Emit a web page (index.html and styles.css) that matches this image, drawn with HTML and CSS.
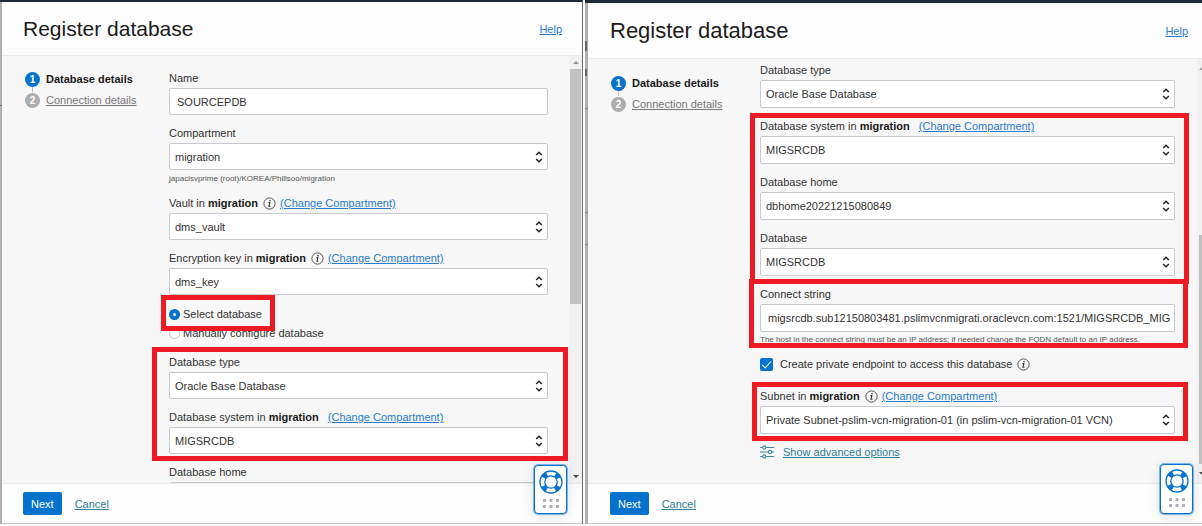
FILE: index.html
```html
<!DOCTYPE html>
<html lang="en">
<head>
<meta charset="utf-8">
<title>Register database</title>
<meta name="viewport" content="width=device-width, initial-scale=1">
<link rel="stylesheet" href="styles.css">
</head>
<body>
<svg class="sprite" aria-hidden="true">
  <symbol id="updown" viewBox="0 0 8 12"><path d="M1.2 4 4 1.3 6.8 4M1.2 8 4 10.7 6.8 8" fill="none" stroke="#222" stroke-width="1.5"/></symbol>
  <symbol id="info" viewBox="0 0 13 13"><circle cx="6.5" cy="6.5" r="5.6" fill="none" stroke="#555" stroke-width="1"/><path d="M5.4 5.6h1.4L6 9.3h1.4" fill="none" stroke="#333" stroke-width="1.1"/><circle cx="7" cy="3.7" r=".8" fill="#333"/></symbol>
  <symbol id="ring" viewBox="0 0 24 24"><circle cx="12" cy="12" r="8.6" fill="none" stroke="#0572ce" stroke-width="5.2" stroke-dasharray="4.8 8.709" stroke-dashoffset="-4.354"/><circle cx="12" cy="12" r="11" fill="none" stroke="#0572ce" stroke-width="1.3"/><circle cx="12" cy="12" r="6.2" fill="#fff" stroke="#0572ce" stroke-width="1.3"/></symbol>
  <symbol id="dots" viewBox="0 0 16 9"><path d="M0 0h3v3H0zM6.500 0h3v3h-3zM13 0h3v3h-3zM0 6h3v3H0zM6.500 6h3v3h-3zM13 6h3v3h-3z" fill="#adb1b8"/></symbol>
  <symbol id="sliders" viewBox="0 0 14 14"><g fill="none" stroke="#3a87a0" stroke-width="1.1"><path d="M0 2.500h2.500M6 2.500h8M0 7h8M12 7h2M0 11.500h2.500M6 11.500h8"/><circle cx="4.300" cy="2.500" r="1.600"/><circle cx="10" cy="7" r="1.600"/><circle cx="4.300" cy="11.500" r="1.600"/></g></symbol>
</svg>
<main class="screens">
  <section class="screen screen-first">
    <div class="backdrop"></div>
    <div class="panel">
      <header class="panel-head"><h1>Register database</h1><a href="#">Help</a></header>
      <div class="panel-body">
        <ol class="steps">
          <li class="current"><span class="num">1</span><span>Database details</span></li>
          <li><span class="num">2</span><a href="#">Connection details</a></li>
        </ol>
        <form class="form">
          <div class="field">
            <div class="label"><label for="name">Name</label></div>
            <input class="text" id="name" type="text" value="SOURCEPDB">
          </div>
          <div class="field">
            <div class="label"><label for="comp">Compartment</label></div>
            <div class="select"><select id="comp"><option>migration</option></select><svg><use href="#updown"/></svg></div>
            <p class="hint">japacisvprime (root)/KOREA/Phillsoo/migration</p>
          </div>
          <div class="field">
            <div class="label"><label for="vault">Vault in <b>migration</b></label><svg class="info"><use href="#info"/></svg><a href="#">(Change Compartment)</a></div>
            <div class="select"><select id="vault"><option>dms_vault</option></select><svg><use href="#updown"/></svg></div>
          </div>
          <div class="field">
            <div class="label"><label for="key">Encryption key in <b>migration</b></label><svg class="info"><use href="#info"/></svg><a href="#">(Change Compartment)</a></div>
            <div class="select"><select id="key"><option>dms_key</option></select><svg><use href="#updown"/></svg></div>
          </div>
          <div class="radios">
            <label class="radio mark mark-radio"><input type="radio" name="mode" checked>Select database</label>
            <label class="radio"><input type="radio" name="mode">Manually configure database</label>
          </div>
          <div class="group mark mark-type">
            <div class="field">
              <div class="label"><label for="type1">Database type</label></div>
              <div class="select"><select id="type1"><option>Oracle Base Database</option></select><svg><use href="#updown"/></svg></div>
            </div>
            <div class="field">
              <div class="label"><label for="sys1">Database system in <b>migration</b></label><a href="#">(Change Compartment)</a></div>
              <div class="select"><select id="sys1"><option>MIGSRCDB</option></select><svg><use href="#updown"/></svg></div>
            </div>
          </div>
          <div class="field">
            <div class="label"><label for="home1">Database home</label></div>
            <div class="select"><select id="home1"><option></option></select></div>
          </div>
        </form>
        <div class="scrollbar"><i class="arrow up"></i><i class="thumb"></i><i class="arrow down"></i></div>
      </div>
      <footer class="panel-foot"><button type="button">Next</button><a href="#">Cancel</a></footer>
      <button class="support" type="button" aria-label="Support"><svg class="ring"><use href="#ring"/></svg><svg class="dots"><use href="#dots"/></svg></button>
    </div>
  </section>
  <section class="screen screen-second">
    <div class="backdrop"></div>
    <div class="panel">
      <header class="panel-head"><h1>Register database</h1><a href="#">Help</a></header>
      <div class="panel-body">
        <ol class="steps">
          <li class="current"><span class="num">1</span><span>Database details</span></li>
          <li><span class="num">2</span><a href="#">Connection details</a></li>
        </ol>
        <form class="form">
          <div class="field">
            <div class="label"><label for="type2">Database type</label></div>
            <div class="select"><select id="type2"><option>Oracle Base Database</option></select><svg><use href="#updown"/></svg></div>
          </div>
          <div class="group mark mark-system">
            <div class="field">
              <div class="label"><label for="sys2">Database system in <b>migration</b></label><a href="#">(Change Compartment)</a></div>
              <div class="select"><select id="sys2"><option>MIGSRCDB</option></select><svg><use href="#updown"/></svg></div>
            </div>
            <div class="field">
              <div class="label"><label for="home2">Database home</label></div>
              <div class="select"><select id="home2"><option>dbhome20221215080849</option></select><svg><use href="#updown"/></svg></div>
            </div>
            <div class="field">
              <div class="label"><label for="db2">Database</label></div>
              <div class="select"><select id="db2"><option>MIGSRCDB</option></select><svg><use href="#updown"/></svg></div>
            </div>
          </div>
          <div class="field mark mark-connect">
            <div class="label"><label for="conn">Connect string</label></div>
            <input class="text" id="conn" type="text" value="migsrcdb.sub12150803481.pslimvcnmigrati.oraclevcn.com:1521/MIGSRCDB_MIG">
            <p class="hint">The host in the connect string must be an IP address; if needed change the FQDN default to an IP address.</p>
          </div>
          <div class="check">
            <input type="checkbox" id="endpoint" checked><label for="endpoint">Create private endpoint to access this database</label><svg class="info"><use href="#info"/></svg>
          </div>
          <div class="field mark mark-subnet">
            <div class="label"><label for="subnet">Subnet in <b>migration</b></label><svg class="info"><use href="#info"/></svg><a href="#">(Change Compartment)</a></div>
            <div class="select"><select id="subnet"><option>Private Subnet-pslim-vcn-migration-01 (in pslim-vcn-migration-01 VCN)</option></select><svg><use href="#updown"/></svg></div>
          </div>
          <div class="advanced"><svg><use href="#sliders"/></svg><a href="#">Show advanced options</a></div>
        </form>
        <div class="scrollbar"><i class="arrow up"></i><i class="thumb"></i><i class="arrow down"></i></div>
      </div>
      <footer class="panel-foot"><button type="button">Next</button><a href="#">Cancel</a></footer>
      <button class="support" type="button" aria-label="Support"><svg class="ring"><use href="#ring"/></svg><svg class="dots"><use href="#dots"/></svg></button>
    </div>
  </section>
</main>
</body>
</html>
```
FILE: styles.css
```css
* { box-sizing: border-box; }
body {
  margin: 0;
  background: #fff;
  color: #333;
  font: 11px/16px "Liberation Sans", Arial, sans-serif;
}
.sprite { position: absolute; width: 0; height: 0; }
a { color: #2a7bd0; }
b { color: #1a1a1a; }
input, select, button { font: inherit; color: inherit; margin: 0; }

.screens {
  display: grid;
  grid-template-columns: 583fr 617fr;
  gap: 2px;
  height: 100vh;
  padding-bottom: 2px;
}
.screen {
  display: flex;
  min-width: 0;
  min-height: 0;
  border-top: 2px solid #1f2a36;
}
.screen-first { border-right: 1px solid #6b6b6b; }
.screen-second { border-top-width: 3px; }
.backdrop {
  flex: none;
  width: 2px;
  background: linear-gradient(#777, #777) 0 103px / 100% 1px no-repeat, #b0b0b0;
}
.screen-second .backdrop {
  width: 3px;
  background:
    linear-gradient(#666, #666) 0 38px / 2px 10px no-repeat,
    linear-gradient(#666, #666) 0 66px / 2px 7px no-repeat,
    linear-gradient(#888, #888) 0 105px / 100% 1px no-repeat,
    linear-gradient(#888, #888) 0 209px / 100% 1px no-repeat,
    linear-gradient(#888, #888) 0 241px / 100% 1px no-repeat,
    #b0b0b0;
}
.panel {
  position: relative;
  flex: 1;
  min-width: 0;
  display: flex;
  flex-direction: column;
  background: #fdfdfd;
  border-bottom: 1px solid #c4c8cf;
}
.panel-head {
  flex: none;
  display: flex;
  align-items: center;
  justify-content: space-between;
  height: 54px;
  padding: 0 20px 0 21px;
  border-bottom: 1px solid #ebebeb;
}
.screen-second .panel-head { height: 56px; padding: 0 14px 0 22px; }
h1 { margin: 0; font-size: 21px; line-height: 28px; font-weight: 400; color: #1b1b1b; }
.screen-second h1 { font-size: 22px; }

.panel-body {
  flex: 1;
  min-height: 0;
  display: flex;
  overflow: hidden;
  background: #f7f7f7;
  padding-left: 23px;
}
.steps {
  flex: none;
  width: 144px;
  margin: 0;
  padding: 15px 0 0;
  list-style: none;
  display: flex;
  flex-direction: column;
  gap: 5px;
}
.screen-second .steps { width: 149px; padding-top: 16px; }
.steps li { display: flex; align-items: center; gap: 6px; position: relative; }
.steps a { color: #777; }
.steps .current { font-weight: 700; color: #1a1a1a; }
.steps .current::after {
  content: "";
  position: absolute;
  left: 7px;
  top: 16px;
  width: 1px;
  height: 5px;
  background: #bbb;
}
.num {
  width: 15px;
  height: 15px;
  border-radius: 50%;
  background: #adadad;
  color: #fff;
  font-weight: 700;
  font-size: 10px;
  line-height: 15px;
  text-align: center;
}
.current .num { background: #0572ce; }

.form {
  flex: 1;
  min-width: 0;
  display: flex;
  flex-direction: column;
  gap: 10px;
  padding-top: 14px;
}
.screen-second .form { padding-top: 3px; }
.form > * { flex: none; }
.group { display: flex; flex-direction: column; gap: 10px; }
.field { display: flex; flex-direction: column; gap: 2px; }
.label { display: flex; align-items: center; height: 16px; gap: 4px; white-space: nowrap; }
.label label + a { margin-left: 5px; }
.info { flex: none; width: 13px; height: 13px; margin-left: 1px; }
.select { display: grid; align-items: center; }
.select > * { grid-area: 1 / 1; }
.select svg { justify-self: end; width: 8px; height: 12px; margin-right: 5px; pointer-events: none; }
.select select, .text {
  width: 100%;
  height: 27px;
  border: 1px solid #c7cad0;
  border-radius: 2px;
  background: #fff;
  padding: 0 5px;
  appearance: none;
  outline: 0;
}
.text { padding: 0 2px 0 7px; }
.screen-second .select select, .screen-second .text { height: 28px; }
.hint { margin: 0; font-size: 8px; line-height: 12px; color: #555; white-space: nowrap; }
.screen-first .hint { padding-top: 1px; }

.radios { display: flex; flex-direction: column; align-items: flex-start; gap: 3px; padding: 1px 0 3px; }
.radio { display: flex; align-items: center; gap: 3px; }
.radio input {
  appearance: none;
  width: 11px;
  height: 11px;
  border: 1px solid #c0c3c8;
  border-radius: 50%;
  background: #fff;
}
.radio input:checked { border: 4px solid #0572ce; }
.check { display: flex; align-items: center; gap: 4px; padding-bottom: 6px; }
.check input {
  appearance: none;
  width: 13px;
  height: 13px;
  margin-right: 3px;
  border-radius: 2px;
  background: #0572ce;
  display: grid;
  place-items: center;
}
.check input::after {
  content: "";
  width: 4px;
  height: 8px;
  margin-bottom: 2px;
  border: solid #fff;
  border-width: 0 1px 1px 0;
  transform: rotate(42deg);
}
.advanced { display: flex; align-items: center; gap: 9px; }
.advanced svg { width: 14px; height: 14px; }
.advanced a, .panel-foot a { color: #2e7d99; }

/* Red callouts drawn over the fields they point at */
.mark { position: relative; }
.mark::after {
  content: "";
  position: absolute;
  z-index: 1;
  border: 5px solid #ed1c24;
  pointer-events: none;
}
.mark-radio::after { inset: -11px -13px -9px -8px; }
.mark-type::after { inset: -7px -20px -7px -17px; }
.mark-system::after { inset: -5px -14px -8px -10px; }
.mark-connect::after { inset: -7px -13px -2px -11px; }
.mark-subnet::after { inset: -6px -13px -7px -8px; }

.scrollbar {
  flex: none;
  width: 13px;
  margin-left: 21px;
  padding: 0 1px;
  display: flex;
  flex-direction: column;
  align-items: stretch;
  background: #f1f1f1;
}
.screen-second .scrollbar { width: 5px; margin-left: 22px; padding: 0 0 0 2px; overflow: hidden; }
.thumb { height: 55%; background: #c1c1c1; }
.screen-second .thumb { height: 54%; margin-top: auto; }
.arrow { flex: none; height: 13px; display: grid; place-items: center; }
.arrow::after { content: ""; border: 3px solid transparent; }
.up::after { border-bottom-color: #999; border-top: 0; }
.down { margin-top: auto; }
.down::after { border-top-color: #444; border-bottom: 0; }
.screen-second .down { margin-top: 0; }
.screen-second .arrow { justify-content: start; height: 19px; }

.panel-foot {
  flex: none;
  display: flex;
  align-items: center;
  gap: 13px;
  height: 40px;
  padding: 0 21px;
  border-top: 1px solid #ebebeb;
}
.screen-second .panel-foot { padding-left: 22px; }
.panel-foot button {
  height: 23px;
  padding: 0 8px;
  border: 0;
  border-radius: 2px;
  background: #0572ce;
  color: #fff;
}
.support {
  position: absolute;
  z-index: 2;
  right: 15px;
  bottom: 9px;
  width: 33px;
  height: 49px;
  display: flex;
  flex-direction: column;
  align-items: center;
  gap: 5px;
  padding: 4px 0 0;
  border: 1px solid #0572ce;
  border-radius: 4px;
  background: #fff;
  box-shadow: 0 0 0 1px #7db5e4, 0 2px 12px #0002;
}
.screen-second .support { right: 9px; height: 50px; }
.ring { width: 24px; height: 24px; }
.dots { width: 16px; height: 9px; }
```
